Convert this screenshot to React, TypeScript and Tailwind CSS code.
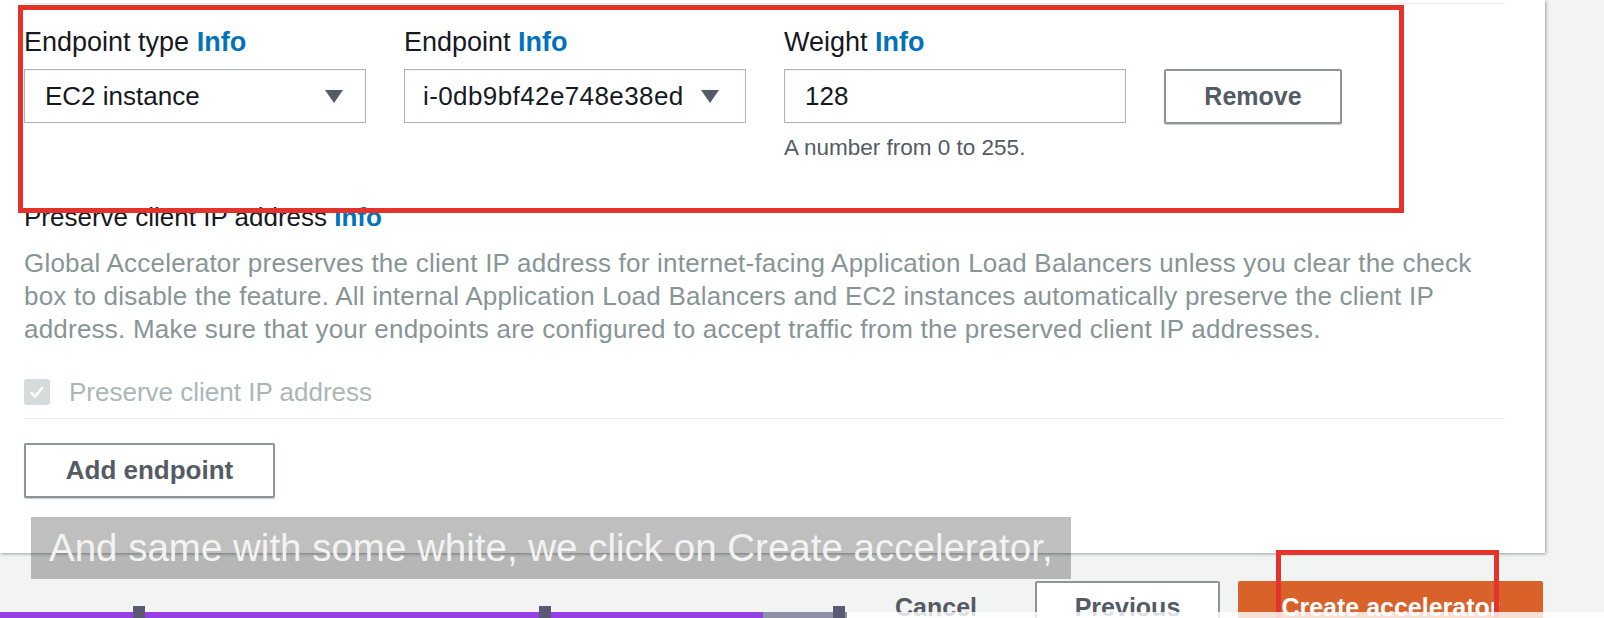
import React from 'react'

const Caret = () => (
  <svg width="18" height="13" viewBox="0 0 18 13" className="shrink-0">
    <polygon points="0,0 18,0 9,13" fill="#545b64" />
  </svg>
)

function Label({ text, size = 'text-[27px]' }: { text: string; size?: string }) {
  return (
    <div className={`h-[30px] leading-[30px] text-[#16191f] whitespace-nowrap ${size}`}>
      {text} <span className="font-bold text-[#0073bb]">Info</span>
    </div>
  )
}

export default function App() {
  return (
    <div className="relative h-[618px] w-[1604px] overflow-hidden bg-[#f2f3f3] font-['Liberation_Sans',Arial,sans-serif]">
      {/* panel */}
      <div className="h-[553px] w-[1545px] bg-white pl-[24px] pr-[40px] pt-[3px] shadow-[1px_1px_3px_rgba(0,0,0,0.35)]">
        <div className="border-t border-[#eaeded] pt-[23px]">
          <div className="flex gap-[38px]">
            <div className="w-[342px]">
              <Label text="Endpoint type" />
              <div className="mt-[12px] flex h-[54px] items-center justify-between border border-[#aab7b8] pl-[20px] pr-[22px] text-[26px] text-[#16191f] shadow-[inset_0_1px_1px_rgba(0,0,0,0.06)]">
                <span>EC2 instance</span>
                <Caret />
              </div>
            </div>
            <div className="w-[342px]">
              <Label text="Endpoint" />
              <div className="mt-[12px] flex h-[54px] items-center justify-between border border-[#aab7b8] pl-[18px] pr-[26px] text-[26px] tracking-[0.4px] text-[#16191f] shadow-[inset_0_1px_1px_rgba(0,0,0,0.06)]">
                <span>i-0db9bf42e748e38ed</span>
                <Caret />
              </div>
            </div>
            <div className="w-[342px]">
              <Label text="Weight" />
              <div className="mt-[12px] flex h-[54px] items-center border border-[#aab7b8] pl-[20px] text-[26px] text-[#16191f] shadow-[inset_0_1px_1px_rgba(0,0,0,0.06)]">
                128
              </div>
              <div className="mt-[12px] h-[26px] text-[22.5px] leading-[26px] text-[#545b64]">A number from 0 to 255.</div>
            </div>
            <button className="mt-[42px] h-[55px] w-[178px] rounded-[2px] border-2 border-[#8d9696] bg-white text-[25px] font-bold text-[#545b64] shadow-[0_1px_1px_rgba(0,0,0,0.2)]">
              Remove
            </button>
          </div>

          <div className="mt-[41px]">
            <Label text="Preserve client IP address" size="text-[26px]" />
          </div>
          <p className="mt-[15px] whitespace-nowrap text-[26px] leading-[33px] tracking-[0.22px] text-[#879596]">
            Global Accelerator preserves the client IP address for internet-facing Application Load Balancers unless you clear the check
            <br />
            box to disable the feature. All internal Application Load Balancers and EC2 instances automatically preserve the client IP
            <br />
            address. Make sure that your endpoints are configured to accept traffic from the preserved client IP addresses.
          </p>

          <div className="mt-[33px] flex h-[26px] items-center gap-[19px]">
            <div className="flex h-[26px] w-[26px] items-center justify-center rounded-[3px] bg-[#d5dbdb]">
              <svg width="16" height="14" viewBox="0 0 16 14">
                <path d="M2 7.5 L6 11.5 L14 2" stroke="#ffffff" strokeWidth="2.6" fill="none" />
              </svg>
            </div>
            <span className="text-[26px] text-[#aab7b8]">Preserve client IP address</span>
          </div>

          <div className="mt-[13px] border-t border-[#eaeded]" />

          <button className="mt-[24px] h-[55px] w-[251px] rounded-[2px] border-2 border-[#8d9696] bg-white text-[26px] font-bold text-[#545b64] shadow-[0_1px_1px_rgba(0,0,0,0.2)]">
            Add endpoint
          </button>
        </div>
      </div>

      {/* footer buttons */}
      <div className="mt-[28px] flex justify-end pr-[61px]">
        <button className="mr-[29px] h-[54px] w-[140px] text-[25px] font-bold text-[#545b64]">Cancel</button>
        <button className="mr-[18px] h-[54px] w-[185px] rounded-[2px] border-2 border-[#8d9696] bg-white text-[25px] font-bold text-[#545b64]">
          Previous
        </button>
        <button className="h-[54px] w-[305px] rounded-[2px] bg-[#d9622b] text-[25px] font-bold text-white">Create accelerator</button>
      </div>

      {/* annotation boxes */}
      <div className="pointer-events-none absolute left-[18px] top-[5px] h-[208px] w-[1386px] border-[5px] border-[#e3332a]" />
      <div className="pointer-events-none absolute left-[1276px] top-[550px] h-[90px] w-[223px] border-[5px] border-[#e3332a]" />

      {/* subtitle */}
      <div className="absolute left-[31px] top-[517px] flex h-[62px] w-[1040px] items-center bg-black/25 pl-[18px] text-[38.5px] text-[#f3f3f3]">
        And same with some white, we click on Create accelerator,
      </div>

      {/* video progress bar */}
      <div className="absolute bottom-0 left-0 h-[6px] w-full bg-white/80">
        <div className="absolute left-0 top-0 h-[6px] w-[847px] bg-[#8e90a8]" />
        <div className="absolute left-0 top-0 h-[6px] w-[763px] bg-[#9440e4]" />
      </div>
      <div className="absolute bottom-0 left-[133px] h-[12px] w-[12px] bg-[#595a73]" />
      <div className="absolute bottom-0 left-[539px] h-[12px] w-[12px] bg-[#595a73]" />
      <div className="absolute bottom-0 left-[833px] h-[12px] w-[12px] bg-[#595a73]" />
    </div>
  )
}
